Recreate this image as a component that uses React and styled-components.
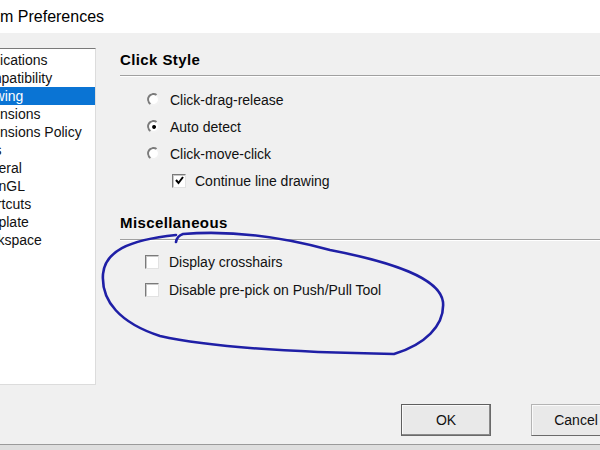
import React from 'react';
import styled, { createGlobalStyle } from 'styled-components';

const GlobalStyle = createGlobalStyle`
  html, body {
    margin: 0;
    padding: 0;
    width: 600px;
    height: 450px;
    overflow: hidden;
    background: #f0f0f0;
    font-family: "Liberation Sans", Arial, sans-serif;
    color: #111;
  }
`;

const Page = styled.div`
  position: relative;
  width: 600px;
  height: 450px;
  overflow: hidden;
`;

const Window = styled.div`
  display: flex;
  flex-direction: column;
  width: 675px;
  margin-left: -40px;
  background: #f0f0f0;
`;

const TitleBar = styled.div`
  display: flex;
  align-items: center;
  height: 33px;
  background: #ffffff;
  font-size: 16px;
  color: #000;
`;

const Body = styled.div`
  display: flex;
  padding: 15px 0 0 8px;
  gap: 24px;
`;

const ListBox = styled.ul`
  list-style: none;
  margin: 0;
  padding: 2px 0;
  width: 128px;
  height: 337px;
  box-sizing: border-box;
  background: #ffffff;
  border: 1px solid #dcdcdc;
  border-top-color: #7a7a7a;
  border-left-color: #7a7a7a;
  overflow: hidden;
`;

const ListItem = styled.li`
  height: 18px;
  line-height: 18px;
  padding-left: 3px;
  font-size: 14px;
  white-space: nowrap;
  background: ${(p) => (p.$selected ? '#0a74d4' : 'transparent')};
  color: ${(p) => (p.$selected ? '#ffffff' : '#111')};
`;

const Panel = styled.div`
  flex: 1;
  display: flex;
  flex-direction: column;
  margin-top: 2px;
`;

const Heading = styled.div`
  font-size: 15px;
  font-weight: bold;
  letter-spacing: 0.4px;
  line-height: 20px;
  height: 20px;
  margin-top: ${(p) => p.$top || 0}px;
  color: #000;
`;

const Rule = styled.div`
  height: 1px;
  margin-top: ${(p) => p.$top || 5}px;
  background: #a0a0a0;
  border-bottom: 1px solid #ffffff;
`;

const Options = styled.div`
  display: flex;
  flex-direction: column;
  margin-top: ${(p) => p.$top}px;
  padding-left: ${(p) => p.$indent}px;
`;

const Row = styled.label`
  display: flex;
  align-items: center;
  height: ${(p) => p.$h || 27}px;
  padding-left: ${(p) => p.$indent || 0}px;
  font-size: 14px;
  white-space: nowrap;
  gap: ${(p) => p.$gap || 10}px;
`;

const Radio = styled.span`
  position: relative;
  width: 13px;
  height: 13px;
  box-sizing: border-box;
  border-radius: 50%;
  background: #ffffff;
  border: 2px solid #f2f2f2;
  border-top-color: #7c7c7c;
  border-left-color: #7c7c7c;
  transform: rotate(-10deg);
  flex-shrink: 0;

  &::after {
    content: '';
    display: ${(p) => (p.$checked ? 'block' : 'none')};
    position: absolute;
    left: 2.5px;
    top: 2.5px;
    width: 4px;
    height: 4px;
    border-radius: 50%;
    background: #000;
  }
`;

const Box = styled.span`
  display: flex;
  align-items: center;
  justify-content: center;
  width: 14px;
  height: 14px;
  box-sizing: border-box;
  background: #ffffff;
  border: 1px solid #e2e2e2;
  border-top-color: #7a7a7a;
  border-left-color: #7a7a7a;
  box-shadow: inset 1px 1px 0 #c8c8c8;
  flex-shrink: 0;
`;

const Footer = styled.div`
  display: flex;
  justify-content: flex-end;
  gap: 40px;
  padding: 19px 14px 8px 0;
`;

const Button = styled.button`
  width: 90px;
  height: 32px;
  font-family: "Liberation Sans", Arial, sans-serif;
  font-size: 14px;
  color: #111;
  background: #e9e9e9;
  border: 1px solid ${(p) => (p.$default ? '#5f5f5f' : '#b4b4b4')};
  border-right-color: #6a6a6a;
  border-bottom-color: #6a6a6a;
  box-shadow: ${(p) =>
    p.$default ? 'inset -1px -1px 0 #8a8a8a, inset 1px 1px 0 #fafafa' : 'inset 1px 1px 0 #fafafa'};
  padding: 0;
`;

const BottomEdge = styled.div`
  height: 6px;
  border-top: 1px solid #9a9a9a;
  background: #dedede;
`;

const Annotation = styled.svg`
  position: absolute;
  left: 0;
  top: 0;
  pointer-events: none;
`;

const items = [
  'Applications',
  'Compatibility',
  'Drawing',
  'Extensions',
  'Extensions Policy',
  'Files',
  'General',
  'OpenGL',
  'Shortcuts',
  'Template',
  'Workspace',
];

function Check() {
  return (
    <svg width="11" height="11" viewBox="0 0 11 11">
      <polyline points="2,5 4.5,8 9,2" fill="none" stroke="#000" strokeWidth="2" />
    </svg>
  );
}

export default function App() {
  return (
    <Page>
      <GlobalStyle />
      <Window>
        <TitleBar>System Preferences</TitleBar>
        <Body>
          <ListBox>
            {items.map((name) => (
              <ListItem key={name} $selected={name === 'Drawing'}>
                {name}
              </ListItem>
            ))}
          </ListBox>
          <Panel>
            <Heading>Click Style</Heading>
            <Rule />
            <Options $top={9} $indent={27}>
              <Row $gap={10}>
                <Radio />
                Click-drag-release
              </Row>
              <Row $gap={10}>
                <Radio $checked />
                Auto detect
              </Row>
              <Row $gap={10}>
                <Radio />
                Click-move-click
              </Row>
              <Row $indent={25} $gap={9}>
                <Box>
                  <Check />
                </Box>
                Continue line drawing
              </Row>
            </Options>
            <Heading $top={19}>Miscellaneous</Heading>
            <Rule $top={6} />
            <Options $top={7} $indent={25}>
              <Row $h={28} $gap={10}>
                <Box />
                Display crosshairs
              </Row>
              <Row $h={28} $gap={10}>
                <Box />
                Disable pre-pick on Push/Pull Tool
              </Row>
            </Options>
          </Panel>
        </Body>
        <Footer>
          <Button $default>OK</Button>
          <Button>Cancel</Button>
        </Footer>
        <BottomEdge />
      </Window>
      <Annotation width="600" height="450" viewBox="0 0 600 450">
        <path
          d="M 176 242 Q 177 236 183 234 C 232 230 282 237 330 250 C 392 262 440 278 443 302 C 445 326 424 345 394 354 C 330 353 222 350 160 336 C 120 323 101 301 103 274 C 105 252 127 240 176 235"
          fill="none"
          stroke="#1f1fa6"
          strokeWidth="2.6"
          strokeLinecap="round"
        />
      </Annotation>
    </Page>
  );
}
